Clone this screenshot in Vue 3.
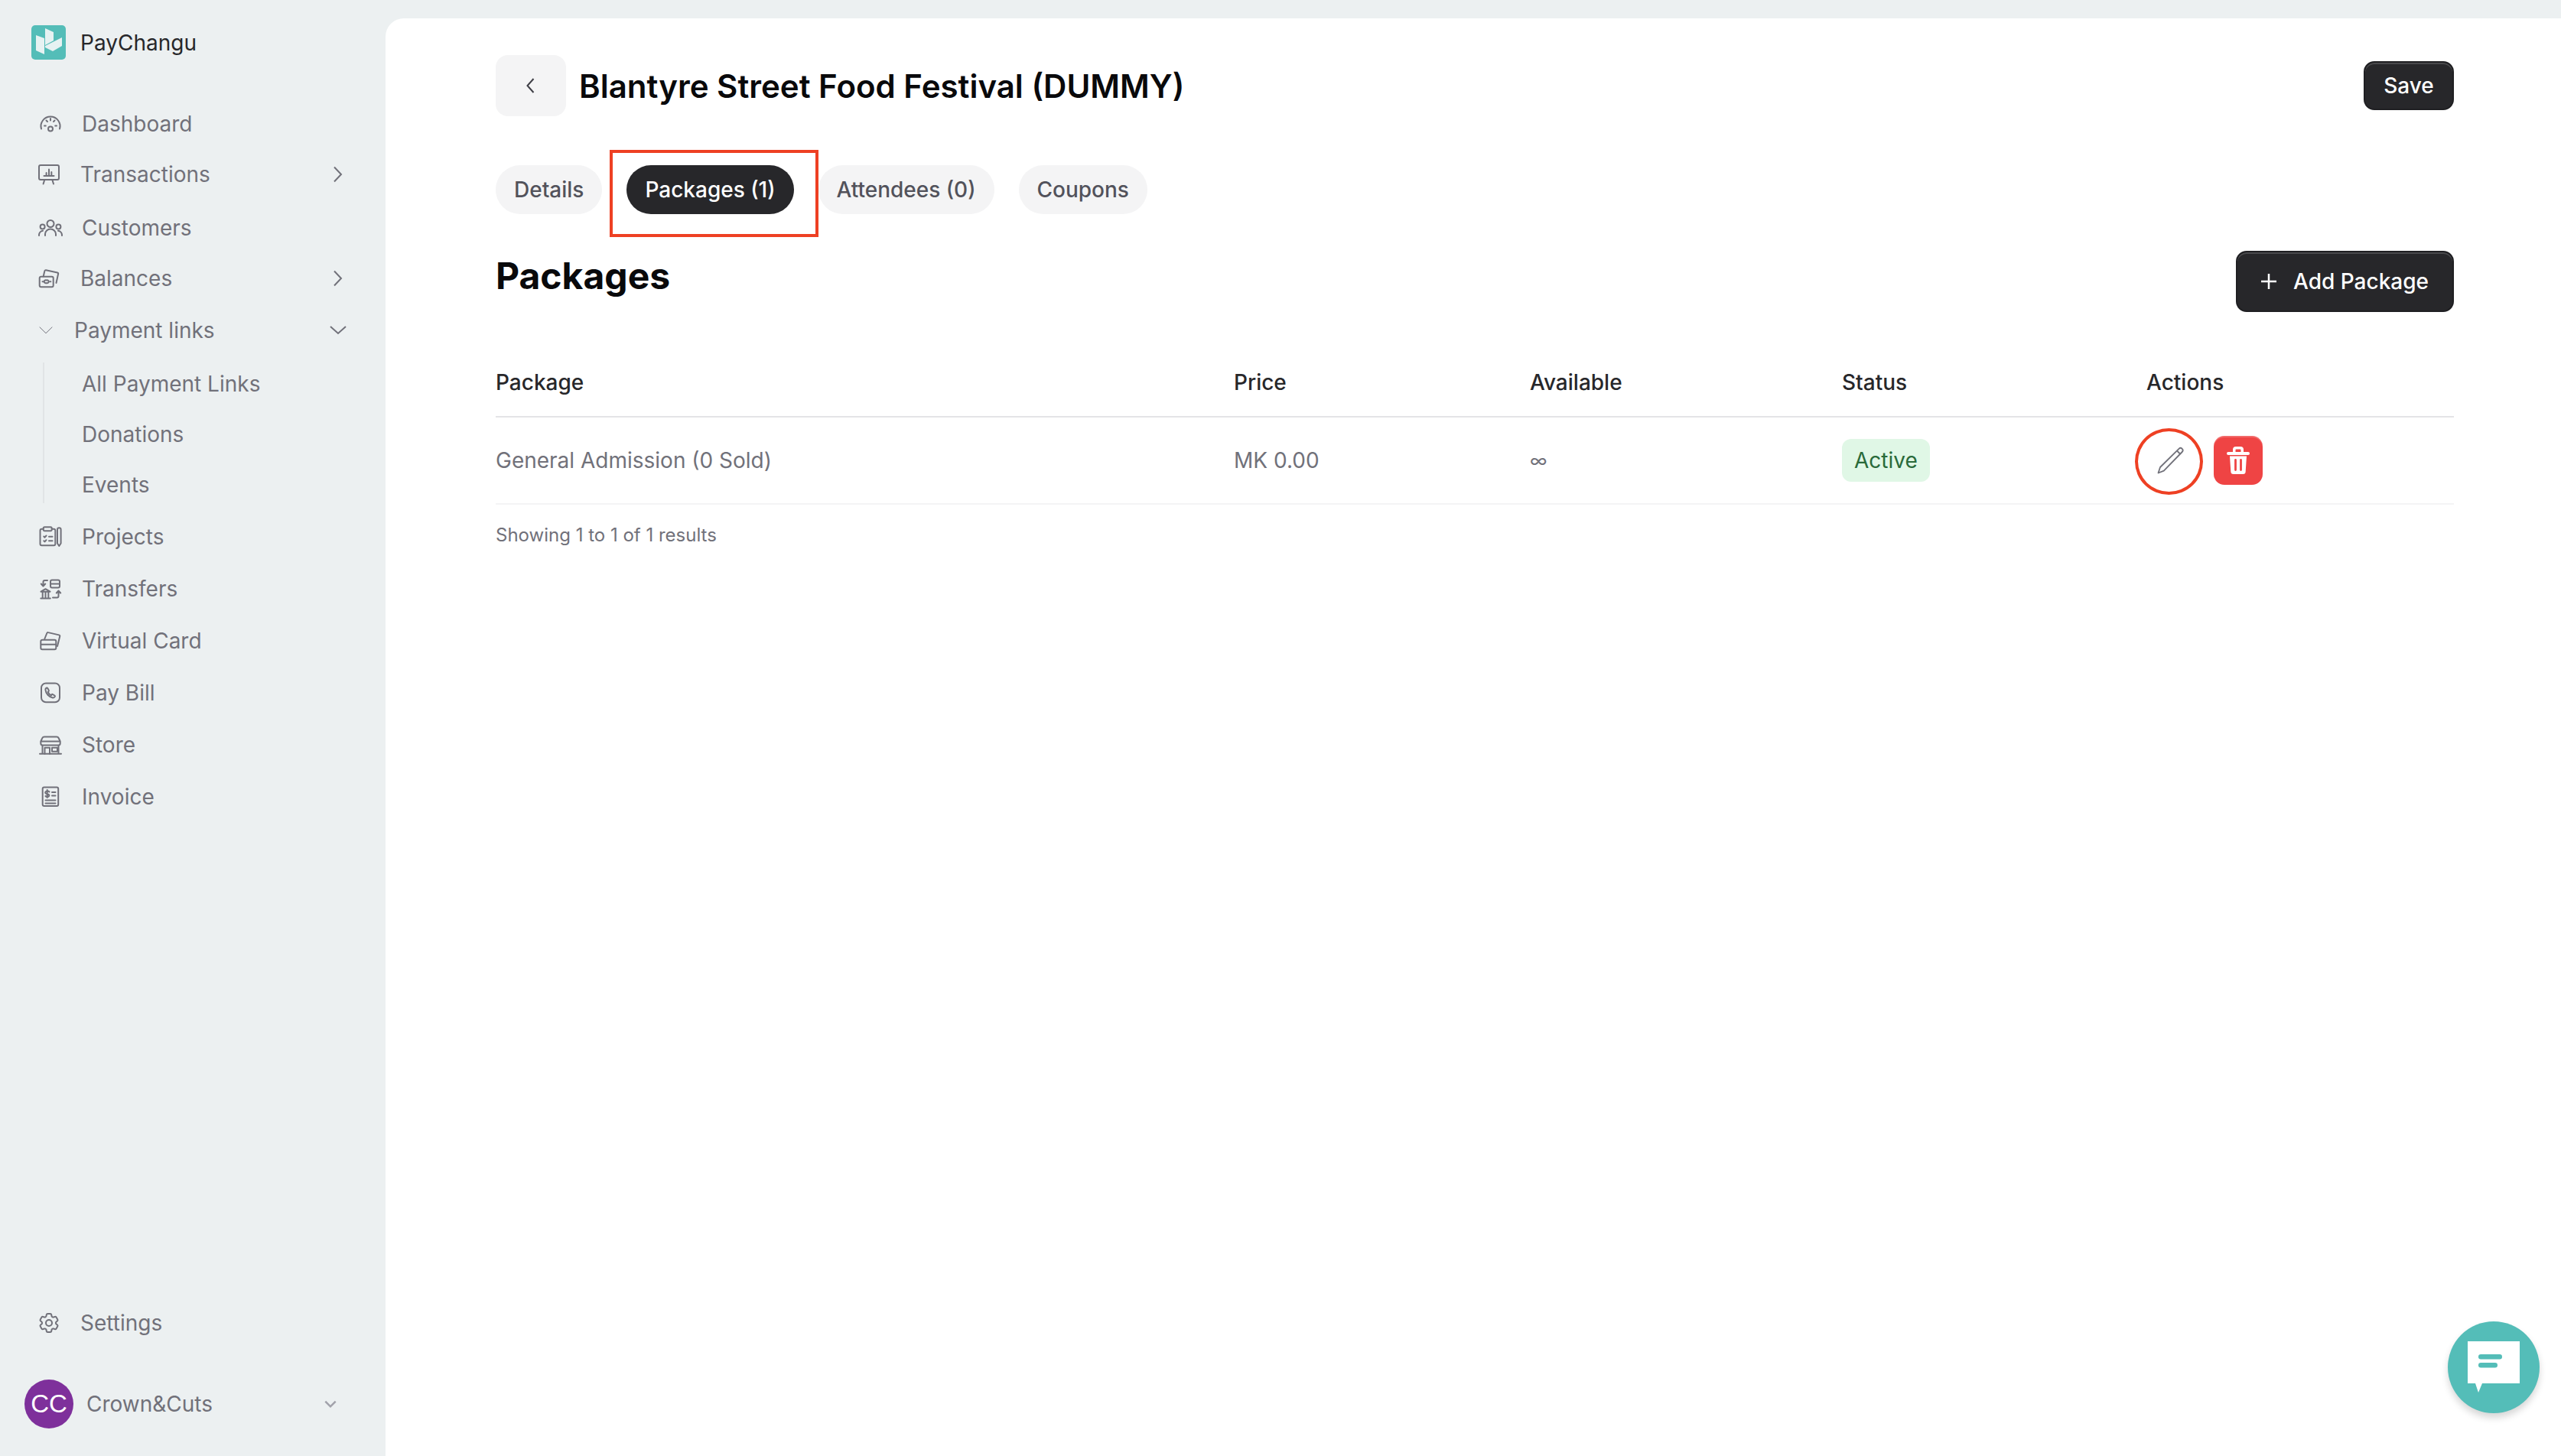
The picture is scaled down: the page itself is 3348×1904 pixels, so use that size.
<template>
  <div class="app">
    <aside class="sidebar">
      <div class="brand">
        <svg class="logo" viewBox="0 0 45 45">
          <rect width="45" height="45" rx="5" fill="#54bdb8" />
          <path d="M6 13l11 4v21L6 33zM18 4l11 5v11l-11 6zM18 27l22-11v11l-12 7-10-5z" fill="#e6f2f2" />
        </svg>
        <span>PayChangu</span>
      </div>

      <nav class="nav">
        <template v-for="item in nav" :key="item.label">
          <div class="nav-row" :class="item.cls">
            <svg class="ico" :class="{ small: item.small }" viewBox="0 0 32 32">
              <path v-for="d in item.icon" :key="d" :d="d" />
            </svg>
            <span>{{ item.label }}</span>
            <svg v-if="item.arrow === 'right'" class="caret" viewBox="0 0 24 24"><path d="M7 2.500L16 12L7 21.500" /></svg>
            <svg v-if="item.arrow === 'down'" class="caret" viewBox="0 0 24 24"><path d="M2 7L12 16L22 7" /></svg>
          </div>
          <div v-if="item.children" class="sub">
            <div v-for="c in item.children" :key="c" class="sub-row">{{ c }}</div>
          </div>
        </template>
      </nav>

      <div class="foot">
        <div class="nav-row alt">
          <svg class="ico settings" viewBox="0 0 24 24">
            <path d="M9.594 3.94c.09-.542.56-.94 1.11-.94h2.593c.55 0 1.02.398 1.11.94l.213 1.281c.063.374.313.686.645.87.074.04.147.083.22.127.325.196.72.257 1.075.124l1.217-.456a1.125 1.125 0 0 1 1.37.49l1.296 2.247a1.125 1.125 0 0 1-.26 1.431l-1.003.827c-.293.241-.438.613-.43.992a7.723 7.723 0 0 1 0 .255c-.008.378.137.75.43.991l1.004.827c.424.35.534.955.26 1.43l-1.298 2.247a1.125 1.125 0 0 1-1.369.491l-1.217-.456c-.355-.133-.75-.072-1.076.124a6.47 6.47 0 0 1-.22.128c-.331.183-.581.495-.644.869l-.213 1.281c-.09.543-.56.94-1.11.94h-2.594c-.55 0-1.019-.398-1.11-.94l-.213-1.281c-.062-.374-.312-.686-.644-.87a6.52 6.52 0 0 1-.22-.127c-.325-.196-.72-.257-1.076-.124l-1.217.456a1.125 1.125 0 0 1-1.369-.49l-1.297-2.247a1.125 1.125 0 0 1 .26-1.431l1.004-.827c.292-.24.437-.613.43-.991a6.932 6.932 0 0 1 0-.255c.007-.38-.138-.751-.43-.992l-1.004-.827a1.125 1.125 0 0 1-.26-1.43l1.297-2.247a1.125 1.125 0 0 1 1.37-.491l1.216.456c.356.133.751.072 1.076-.124.072-.044.146-.086.22-.128.332-.183.582-.495.644-.869l.214-1.28Z" />
            <path d="M15 12a3 3 0 1 1-6 0 3 3 0 0 1 6 0Z" />
          </svg>
          <span>Settings</span>
        </div>
        <div class="account">
          <div class="avatar">CC</div>
          <span>Crown&amp;Cuts</span>
          <svg class="acc-caret" viewBox="0 0 24 24"><path d="M4 8l8 8 8-8" /></svg>
        </div>
      </div>
    </aside>

    <main class="main">
      <div class="top">
        <button class="back">
          <svg viewBox="0 0 24 24"><path d="M15.500 3L7.500 12L15.500 21" /></svg>
        </button>
        <h1>Blantyre Street Food Festival (DUMMY)</h1>
        <button class="dark save">Save</button>
      </div>

      <div class="tabs">
        <div v-for="t in tabs" :key="t" class="tab" :class="{ active: t === 'Packages (1)' }">
          {{ t }}
          <i v-if="t === 'Packages (1)'" class="mark-box"></i>
        </div>
      </div>

      <div class="head">
        <h2>Packages</h2>
        <button class="dark add">
          <svg viewBox="0 0 20 20"><path d="M10 0v20M0 10h20" /></svg>
          Add Package
        </button>
      </div>

      <div class="table">
        <div class="tr th">
          <div>Package</div>
          <div>Price</div>
          <div>Available</div>
          <div>Status</div>
          <div>Actions</div>
        </div>
        <div class="tr td">
          <div>General Admission (0 Sold)</div>
          <div>MK 0.00</div>
          <div class="inf">∞</div>
          <div><span class="badge">Active</span></div>
          <div class="actions">
            <button class="edit">
              <svg viewBox="0 0 40 40">
                <path d="M3.500 36.500L6 29L30.500 4.800a3 3 0 0 1 4.200 0a3 3 0 0 1 0 4.200L10.800 33.600Z" />
                <path d="M28 7.500L32 11.500" />
              </svg>
              <i class="mark-circle"></i>
            </button>
            <button class="del">
              <svg viewBox="0 0 36 36">
                <path class="fill" d="M11 7V4a4 4 0 0 1 4-4h6a4 4 0 0 1 4 4v3h6a1.800 1.800 0 0 1 0 4H5a1.800 1.800 0 0 1 0-4zM14.500 7h7V4.500a1 1 0 0 0-1-1h-5a1 1 0 0 0-1 1z" fill-rule="evenodd" />
                <path class="fill" d="M7 12.500h22l-1.300 20a3.500 3.500 0 0 1-3.500 3.500H11.800a3.500 3.500 0 0 1-3.500-3.500z" />
                <path class="slit" d="M14.500 17.500v13M21.500 17.500v13" />
              </svg>
            </button>
          </div>
        </div>
      </div>

      <p class="count">Showing 1 to 1 of 1 results</p>
    </main>

    <button class="chat">
      <svg viewBox="0 0 68 68">
        <path d="M0 0h68v55H19l-5 12-4-12H0z" fill="#fff" />
        <rect x="14" y="17" width="31" height="6.500" rx="3.200" fill="#54bdb8" />
        <rect x="14" y="28" width="25" height="6.500" rx="3.200" fill="#54bdb8" />
      </svg>
    </button>
  </div>
</template>

<script setup>
const tabs = ["Details", "Packages (1)", "Attendees (0)", "Coupons"];

const nav = [
  {
    label: "Dashboard",
    icon: [
      "M4 22.500A12.500 12.500 0 1 1 28 22.500",
      "M16 19.500a3 3 0 1 0 0 6a3 3 0 1 0 0-6",
      "M16 9v2.500M10.500 11.500l1.500 1.500M21.500 11.500L20 13M8 18.500h1.800M24 18.500h-1.800",
    ],
  },
  {
    label: "Transactions",
    cls: "alt",
    arrow: "right",
    icon: [
      "M5 4h22a2 2 0 0 1 2 2v15a2 2 0 0 1-2 2H5a2 2 0 0 1-2-2V6a2 2 0 0 1 2-2z",
      "M10.300 23L8.600 28.500M20.300 23L22 28.500",
      "M9.500 18h13M12.600 18v-4M16 18V9.600M19.300 18v-5",
    ],
  },
  {
    label: "Customers",
    cls: "mt4",
    icon: [
      "M16 6a4.500 4.500 0 1 0 0 9a4.500 4.500 0 1 0 0-9",
      "M5.600 11.600a3 3 0 1 0 0 6a3 3 0 1 0 0-6",
      "M26.400 11.600a3 3 0 1 0 0 6a3 3 0 1 0 0-6",
      "M9 26v-2a7 6.500 0 0 1 14 0v2",
      "M1 26a6 6 0 0 1 5-6.300",
      "M31 26a6 6 0 0 0-5-6.300",
    ],
  },
  {
    label: "Balances",
    cls: "alt",
    arrow: "right",
    icon: [
      "M5.700 13.700h14a2 2 0 0 1 2 2v9.500a2 2 0 0 1-2 2h-14a2 2 0 0 1-2-2v-9.500a2 2 0 0 1 2-2z",
      "M8.700 13.500l1.600-7a1.500 1.500 0 0 1 1.800-1.200L27 8.500a1.500 1.500 0 0 1 1.100 1.800L25.500 22",
      "M12.700 18.500a2 2 0 1 0 0 3.500a2 2 0 1 0 0-3.500M7.500 20.200h.8M17.500 20.200h.8",
    ],
  },
  {
    label: "Payment links",
    cls: "alt open mt2",
    arrow: "down",
    small: true,
    icon: ["M5.300 10.500L16 21L26.700 10.500"],
    children: ["All Payment Links", "Donations", "Events"],
  },
  {
    label: "Projects",
    cls: "after-sub",
    icon: [
      "M6.700 5.700H4.500a2 2 0 0 0-2 2v17.500a2 2 0 0 0 2 2h15.800a2 2 0 0 0 2-2V7.700a2 2 0 0 0-2-2h-2.600",
      "M8.200 3.300h8a1.500 1.500 0 0 1 1.500 1.500v2a1.500 1.500 0 0 1-1.500 1.500h-8a1.500 1.500 0 0 1-1.500-1.500v-2a1.500 1.500 0 0 1 1.500-1.500z",
      "M25 6.500a2.300 2.300 0 0 1 4.600 0v18l-2.300 3.500-2.300-3.500z",
      "M14 15.700h4.500M14 21.300h4.500M7.300 15.500l1.200 1.200 2-2.200M7.300 21.200l1.200 1.200 2-2.200",
    ],
  },
  {
    label: "Transfers",
    cls: "mt2",
    icon: [
      "M18 4.500h8a2 2 0 0 1 2 2v6a2 2 0 0 1-2 2h-8a2 2 0 0 1-2-2v-6a2 2 0 0 1 2-2zM16 9.500h12",
      "M9.500 16.200l6 3.500h-12zM3.300 28.500h12.500M5.700 20v8M9.500 20v8M13.300 20v8",
      "M12 5H8.500a2 2 0 0 0-2 2v5M3.800 9.500l2.700 3 2.700-3",
      "M19 27.500h5.500a2 2 0 0 0 2-2V19M23.800 21.500l2.700-3 2.700 3",
    ],
  },
  {
    label: "Virtual Card",
    cls: "mt2",
    icon: [
      "M5.300 14.700h16a2 2 0 0 1 2 2v8.600a2 2 0 0 1-2 2h-16a2 2 0 0 1-2-2v-8.600a2 2 0 0 1 2-2zM3.300 20.700h20",
      "M8.300 13.500l3-7.500a1.500 1.500 0 0 1 1.800-.9l14 3.300a1.500 1.500 0 0 1 1.100 1.800L25 23",
    ],
  },
  {
    label: "Pay Bill",
    cls: "mt2",
    icon: [
      "M10 3.500h12a6 6 0 0 1 6 6v12.800a6 6 0 0 1-6 6H10a6 6 0 0 1-6-6V9.500a6 6 0 0 1 6-6z",
      "M11 9.500c-1 .4-1.700 1.400-1.600 2.500.5 5 4.600 9.600 9.600 10.400 1.200.2 2.300-.5 2.800-1.500.3-.5.1-1.100-.4-1.400l-2.400-1.400c-.5-.3-1.100-.2-1.400.3l-.7.9c-2-.8-3.600-2.600-4.300-4.600l.9-.7c.4-.4.5-1 .2-1.400l-1.300-2.400c-.3-.5-.9-.8-1.500-.6z",
    ],
  },
  {
    label: "Store",
    cls: "mt2",
    icon: [
      "M2 27.700h28M5.500 17v10.700M26.500 17v10.700",
      "M8 5.500h16a3 3 0 0 1 2.700 1.700l2 4.300v2.500a2.500 2.500 0 0 1-2.500 2.500H5.800a2.500 2.500 0 0 1-2.500-2.500v-2.500l2-4.300A3 3 0 0 1 8 5.500zM3.300 11.500h25.400",
      "M8.500 27.700v-8h6.500v8M18 19.700h7v5h-7z",
    ],
  },
  {
    label: "Invoice",
    cls: "mt2",
    icon: [
      "M7.700 3.500h16.500a2 2 0 0 1 2 2v20.500a2 2 0 0 1-2 2H7.700a2 2 0 0 1-2-2V5.500a2 2 0 0 1 2-2z",
      "M14.500 9.500c-.5-1-3-1.500-4.500-.5s-1 3 1.500 3.200 3.500 1.800 2.500 3-3.500 1-4.500-.2M11.700 7v10",
      "M18 10h4.500M18 14.500h4.500M9.500 20.500h13M9.500 24.500h13",
    ],
  },
];
</script>

<style>
html,
body {
  margin: 0;
  background: #ecf0f1;
}
</style>

<style scoped>
.app {
  display: flex;
  height: 100vh;
  overflow: hidden;
  position: relative;
  font-family: Inter, "Noto Sans", sans-serif;
  background: #ecf0f1;
}

.sidebar {
  width: 504px;
  flex: none;
  display: flex;
  flex-direction: column;
  padding-top: 23px;
  padding-bottom: 36px;
  box-sizing: border-box;
  color: #71717a;
  font-size: 28px;
}

.brand {
  height: 64px;
  display: flex;
  align-items: center;
  gap: 19px;
  padding-left: 41px;
  color: #27272a;
  margin-bottom: 42px;
}

.brand span {
  padding-top: 2px;
}

.logo {
  width: 45px;
  height: 45px;
}

.nav-row {
  height: 66px;
  display: flex;
  align-items: center;
  padding-left: 50px;
  gap: 25px;
}

.nav-row.alt {
  padding-left: 48px;
}

.mt2 {
  margin-top: 2px;
}

.mt4 {
  margin-top: 4px;
}

.after-sub {
  margin-top: 11px;
}

.ico {
  width: 32px;
  height: 32px;
  flex: none;
  fill: none;
  stroke: #71717a;
  stroke-width: 2;
  stroke-linecap: round;
  stroke-linejoin: round;
}

.ico.small {
  width: 24px;
  height: 24px;
  stroke-width: 1.300;
}

.caret {
  width: 24px;
  height: 24px;
  fill: none;
  stroke: #71717a;
  stroke-width: 2;
  margin-left: auto;
  margin-right: 50px;
}

.sub {
  margin: 9px 0 0 56px;
  padding: 4px 0 0 49px;
  border-left: 2px solid #e1e4e6;
  display: flex;
  flex-direction: column;
  gap: 18px;
}

.sub-row {
  height: 48px;
  line-height: 48px;
}

.foot {
  margin-top: auto;
}

.settings {
  stroke-width: 1.500;
}

.account {
  margin-top: 41px;
  display: flex;
  align-items: center;
  padding-left: 32px;
  gap: 17px;
}

.avatar {
  width: 64px;
  height: 64px;
  border-radius: 50%;
  background: #7e309b;
  color: #fff;
  font-family: "Liberation Sans", sans-serif;
  font-size: 33px;
  display: flex;
  align-items: center;
  justify-content: center;
}

.acc-caret {
  width: 20px;
  height: 20px;
  margin-left: auto;
  margin-right: 62px;
  fill: none;
  stroke: #a1a1aa;
  stroke-width: 3;
}

.main {
  flex: 1;
  margin-top: 24px;
  background: #fff;
  border-radius: 24px 0 0 0;
  padding: 48px 140px 0 144px;
  min-width: 0;
}

button {
  font-family: inherit;
  border: none;
  cursor: pointer;
}

.top {
  display: flex;
  align-items: center;
  gap: 17px;
}

.back {
  width: 92px;
  height: 80px;
  border-radius: 16px;
  background: #f4f4f5;
  display: flex;
  align-items: center;
  justify-content: center;
  padding: 0;
}

.back svg {
  width: 24px;
  height: 24px;
  fill: none;
  stroke: #3f3f46;
  stroke-width: 2;
}

h1 {
  margin: 0;
  font-size: 42px;
  font-weight: 600;
  color: #09090b;
}

.dark {
  background: #27272a;
  color: #fff;
  font-size: 28px;
  font-weight: 500;
  border: 2px solid #1f1f22;
  border-radius: 14px;
  box-shadow: inset 0 2px 0 rgba(255, 255, 255, 0.16);
  display: flex;
  align-items: center;
  justify-content: center;
  padding: 0;
}

.save {
  margin-left: auto;
  width: 118px;
  height: 64px;
}

.tabs {
  display: flex;
  gap: 32px;
  margin-top: 64px;
}

.tab {
  position: relative;
  height: 64px;
  line-height: 64px;
  padding: 0 24px;
  border-radius: 32px;
  background: #f4f4f5;
  color: #52525b;
  font-size: 28px;
  font-weight: 500;
}

.tab.active {
  background: #27272a;
  color: #fff;
}

.mark-box {
  position: absolute;
  left: -22px;
  top: -20px;
  width: 273px;
  height: 114px;
  box-sizing: border-box;
  border: 4px solid #ee4023;
}

.head {
  display: flex;
  justify-content: space-between;
  align-items: flex-start;
  margin-top: 48px;
}

h2 {
  margin: 0;
  font-size: 48px;
  font-weight: 700;
  line-height: 66px;
  color: #09090b;
}

.add {
  width: 285px;
  height: 80px;
  gap: 22px;
}

.add svg {
  width: 20px;
  height: 20px;
  fill: none;
  stroke: #fff;
  stroke-width: 2.500;
}

.table {
  margin-top: 48px;
}

.tr {
  display: grid;
  grid-template-columns: 965px 387px 408px 398px 1fr;
  align-items: center;
}

.th {
  height: 88px;
  border-bottom: 2px solid #e4e4e7;
  color: #27272a;
  font-size: 28px;
  font-weight: 500;
}

.td {
  height: 112px;
  border-bottom: 2px solid #f4f4f5;
  color: #71717a;
  font-size: 28px;
}

.inf {
  font-size: 24px;
}

.badge {
  display: inline-block;
  height: 56px;
  line-height: 56px;
  padding: 0 16px;
  border-radius: 12px;
  background: #e0f7e6;
  color: #2a6a3a;
  vertical-align: middle;
}

.actions {
  display: flex;
  gap: 24px;
}

.edit {
  position: relative;
  width: 64px;
  height: 64px;
  background: transparent;
  padding: 12px;
}

.edit svg {
  display: block;
  width: 40px;
  height: 40px;
  fill: none;
  stroke: #71717a;
  stroke-width: 1.800;
  stroke-linejoin: round;
}

.mark-circle {
  position: absolute;
  left: -15px;
  top: -10px;
  width: 89px;
  height: 87px;
  box-sizing: border-box;
  border: 4px solid #ee4023;
  border-radius: 50%;
}

.del {
  width: 64px;
  height: 64px;
  border-radius: 14px;
  background: #ef4444;
  box-shadow: inset 0 2px 0 rgba(255, 255, 255, 0.2);
  display: flex;
  align-items: center;
  justify-content: center;
  padding: 0;
}

.del svg {
  width: 36px;
  height: 36px;
}

.del .fill {
  fill: #fff;
}

.del .slit {
  fill: none;
  stroke: #ef4444;
  stroke-width: 2.800;
  stroke-linecap: round;
}

.count {
  margin: 24px 0 0;
  font-size: 24px;
  line-height: 32px;
  color: #71717a;
}

.chat {
  position: absolute;
  right: 28px;
  bottom: 56px;
  width: 120px;
  height: 120px;
  border-radius: 50%;
  background: #54bdb8;
  box-shadow: 0 6px 10px rgba(0, 0, 0, 0.16);
  padding: 26px;
}

.chat svg {
  display: block;
  width: 68px;
  height: 68px;
}
</style>
